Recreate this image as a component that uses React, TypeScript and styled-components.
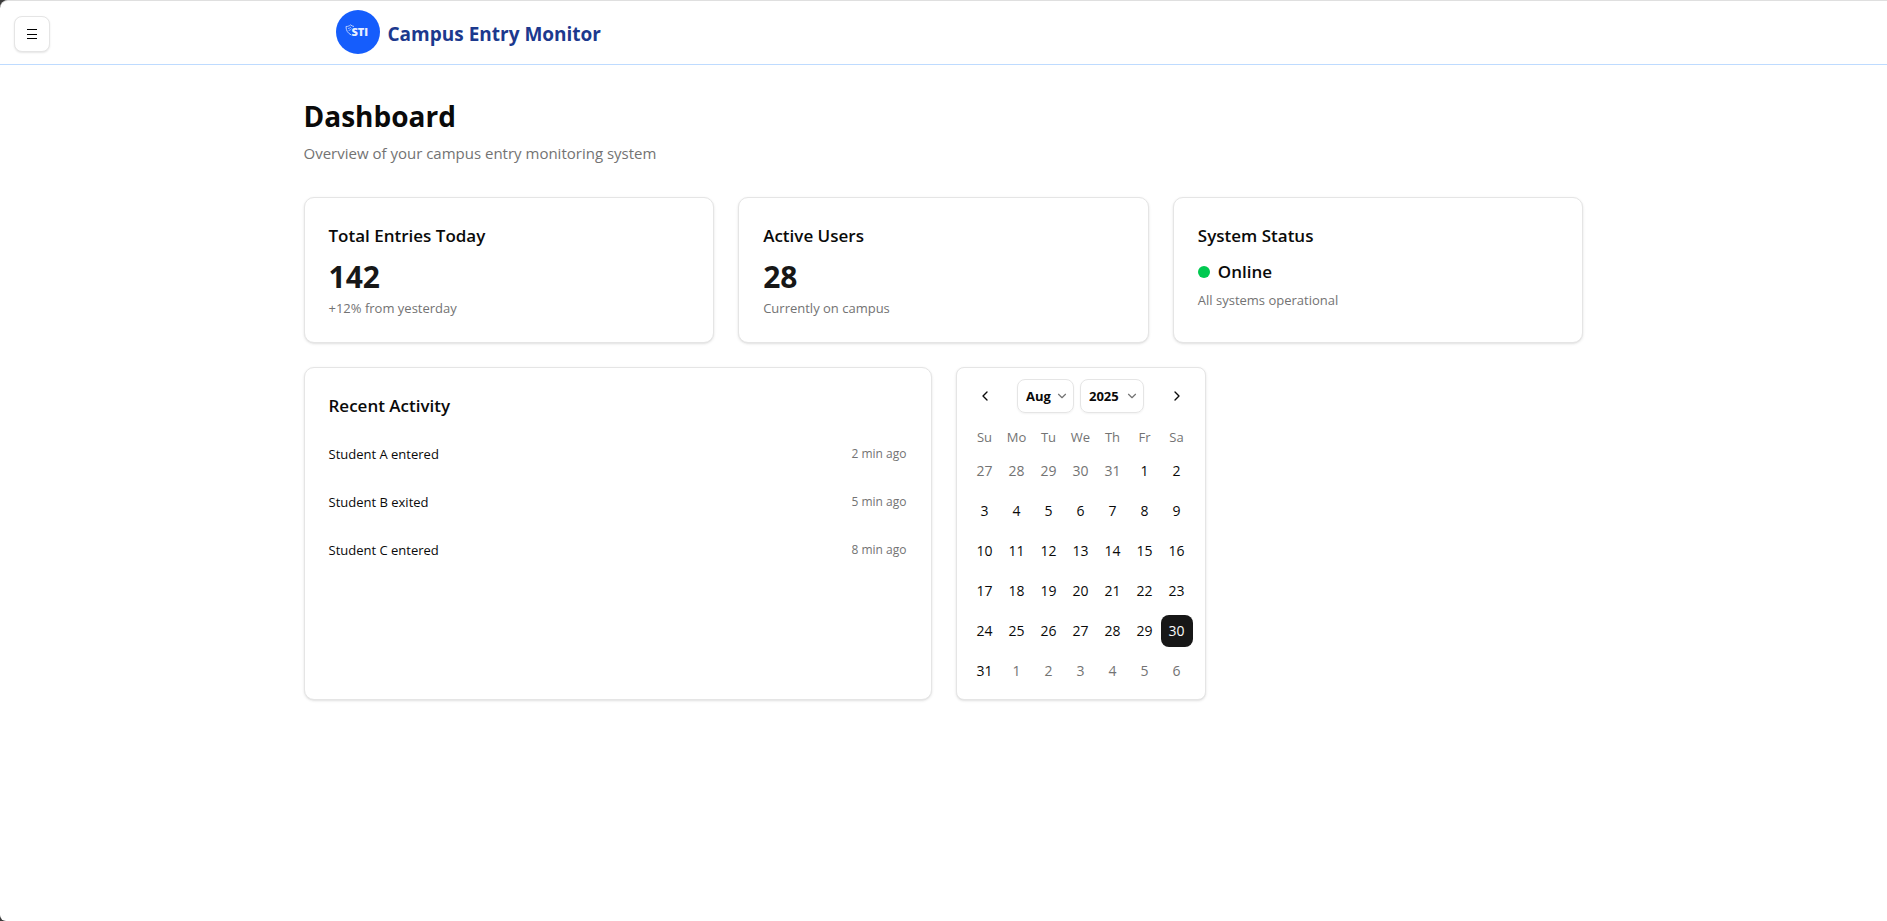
import React, { useState } from "react";
import styled, { createGlobalStyle } from "styled-components";
import { ChevronDown, ChevronLeft, ChevronRight } from "lucide-react";

const color = {
  text: "#0a0a0a",
  muted: "#737373",
  border: "#e5e5e5",
  primary: "#171717",
  brand: "#155dfc",
  brandDark: "#1c398e",
  headerLine: "#bedbff",
  online: "#00c950",
};

const GlobalStyle = createGlobalStyle`
  *, *::before, *::after { box-sizing: border-box; }
  html { background: #3c3c3c; }
  body {
    margin: 0;
    color: ${color.text};
    font-family: "Segoe UI", "Open Sans", "Noto Sans", sans-serif;
    font-size: 13px;
    line-height: 20px;
  }
  h1, h2, p, ul { margin: 0; padding: 0; }
  button, select { font: inherit; color: inherit; }
`;

const Page = styled.div`
  min-height: 100vh;
  background: #fff;
  border-top: 1px solid #dfdfdf;
  border-radius: 8px 0 0 6px;
`;

const Header = styled.header`
  display: flex;
  align-items: center;
  position: relative;
  height: 64px;
  padding-bottom: 1px;
  border-bottom: 1px solid ${color.headerLine};
`;

const MenuButton = styled.button`
  position: absolute;
  left: 14px;
  top: 15px;
  display: grid;
  place-items: center;
  width: 36px;
  height: 36px;
  padding: 0;
  background: #fff;
  border: 1px solid ${color.border};
  border-radius: 8px;
  box-shadow: 0 1px 2px rgba(0, 0, 0, 0.1);
  cursor: pointer;
`;

const Brand = styled.div`
  display: flex;
  align-items: center;
  gap: 8px;
  width: 100%;
  max-width: 1280px;
  margin: 0 auto;
  padding: 0 32px;
`;

const BrandName = styled.span`
  color: ${color.brandDark};
  font-size: 19px;
  line-height: 28px;
  font-weight: 700;
  padding-top: 4px;
`;

const Main = styled.main`
  display: flex;
  flex-direction: column;
  gap: 32px;
  max-width: 1280px;
  margin: 0 auto;
  padding: 32px 0;
`;

const Intro = styled.div`
  display: flex;
  flex-direction: column;
  gap: 6px;
`;

const PageTitle = styled.h1`
  font-size: 28px;
  line-height: 38px;
  font-weight: 700;
`;

const Subtitle = styled.p`
  color: ${color.muted};
  font-size: 15px;
  line-height: 24px;
`;

const Sections = styled.div`
  display: flex;
  flex-direction: column;
  gap: 24px;
`;

const Grid = styled.div<{ $columns: number }>`
  display: grid;
  grid-template-columns: repeat(${(p) => p.$columns}, minmax(0, 1fr));
  gap: 24px;
`;

const Card = styled.section`
  background: #fff;
  border: 1px solid ${color.border};
  border-radius: 10px;
  padding: 24px;
  box-shadow: 0 1px 3px rgba(0, 0, 0, 0.1), 0 1px 2px -1px rgba(0, 0, 0, 0.1);
`;

const CardTitle = styled.h2`
  font-size: 17px;
  line-height: 28px;
  font-weight: 600;
`;

const Figure = styled.p`
  margin-top: 8px;
  color: ${color.primary};
  font-size: 30px;
  line-height: 38px;
  font-weight: 700;

  & + p { margin-top: 2px; }
`;

const Status = styled.p`
  display: flex;
  align-items: center;
  gap: 8px;
  margin-top: 8px;
  font-size: 17px;
  line-height: 28px;
  font-weight: 600;
`;

const Dot = styled.span`
  width: 12px;
  height: 12px;
  border-radius: 50%;
  background: ${color.online};
`;

const Note = styled.p`
  margin-top: 4px;
  color: ${color.muted};
`;

const ActivityList = styled.ul`
  display: flex;
  flex-direction: column;
  gap: 12px;
  margin-top: 16px;
  list-style: none;
`;

const ActivityItem = styled.li`
  display: flex;
  align-items: center;
  justify-content: space-between;
  padding: 8px 0;
`;

const Time = styled.span`
  color: ${color.muted};
  font-size: 12px;
  line-height: 16px;
`;

const CalendarCard = styled(Card)`
  display: flex;
  flex-direction: column;
  gap: 16px;
  justify-self: start;
  padding: 12px;
  border-radius: 8px;
`;

const CalendarNav = styled.div`
  display: flex;
  align-items: center;
  justify-content: space-between;
  height: 32px;
`;

const NavButton = styled.button`
  display: grid;
  place-items: center;
  width: 32px;
  height: 32px;
  padding: 0;
  background: none;
  border: 0;
  border-radius: 8px;
  cursor: pointer;
`;

const Selects = styled.div`
  display: flex;
  gap: 6px;
`;

const SelectBox = styled.div`
  display: grid;
  align-items: center;
  border: 1px solid ${color.border};
  border-radius: 8px;
  box-shadow: 0 1px 2px rgba(0, 0, 0, 0.05);

  & > * { grid-area: 1 / 1; }
  & > svg {
    justify-self: end;
    margin-right: 4px;
    color: ${color.muted};
    pointer-events: none;
  }
`;

const Select = styled.select<{ $width: number }>`
  appearance: none;
  width: ${(p) => p.$width}px;
  height: 32px;
  padding: 0 0 0 8px;
  background: none;
  border: 0;
  font-size: 13px;
  font-weight: 700;
`;

const Month = styled.table`
  border-collapse: collapse;
  table-layout: fixed;
  width: 224px;
`;

const Weekday = styled.th`
  padding: 0;
  height: 19px;
  color: ${color.muted};
  font-size: 13px;
  line-height: 19px;
  font-weight: 400;
`;

const DayCell = styled.td`
  padding: 8px 0 0;
`;

const Day = styled.button<{ $outside: boolean; $selected: boolean }>`
  display: block;
  width: 32px;
  height: 32px;
  padding: 0;
  border: 0;
  border-radius: 8px;
  font-size: 14px;
  text-align: center;
  cursor: pointer;
  background: ${(p) => (p.$selected ? color.primary : "none")};
  color: ${(p) => (p.$selected ? "#fafafa" : p.$outside ? color.muted : color.text)};
`;

const MenuIcon = () => (
  <svg width="12" height="12" viewBox="0 0 12 12" shapeRendering="crispEdges" aria-hidden="true">
    <path d="M1 1.5h10M1 6.5h10M1 10.5h10" stroke="#000" />
  </svg>
);

const Logo = () => (
  <svg width="44" height="44" viewBox="0 0 44 44" role="img" aria-label="STI">
    <circle cx="22" cy="22" r="22" fill={color.brand} />
    <g fill="none" stroke="#b9cffe">
      <path d="M10 16.5c2 0 3.400-.6 4.600-1.600 1 .9 2.200 1.400 3.400 1.600" />
      <path d="M10 16.500c0 4 1.800 6.800 5.400 8.500" />
      <path d="M12 18.600c1.200-.2 2.200-.7 3-1.600M12.600 20.600c1.200-.3 2.300-1 3-2" strokeWidth=".8" />
    </g>
    <text x="15.500" y="26" fill="#e8efff" fontFamily='"Open Sans", sans-serif' fontSize="11" fontWeight="800">
      STI
    </text>
  </svg>
);

const activity = [
  { text: "Student A entered", time: "2 min ago" },
  { text: "Student B exited", time: "5 min ago" },
  { text: "Student C entered", time: "8 min ago" },
];

const monthNames = ["Jan", "Feb", "Mar", "Apr", "May", "Jun", "Jul", "Aug", "Sep", "Oct", "Nov", "Dec"];
const weekdays = ["Su", "Mo", "Tu", "We", "Th", "Fr", "Sa"];
const years = [2023, 2024, 2025, 2026];

function weeksOf(year: number, month: number): Date[][] {
  const lead = new Date(year, month, 1).getDay();
  const length = new Date(year, month + 1, 0).getDate();
  const count = Math.ceil((lead + length) / 7);
  return Array.from({ length: count }, (_, w) =>
    Array.from({ length: 7 }, (_, d) => new Date(year, month, 1 - lead + w * 7 + d))
  );
}

function Calendar() {
  const [view, setView] = useState({ year: 2025, month: 7 });
  const [selected, setSelected] = useState(new Date(2025, 7, 30));

  const show = (year: number, month: number) => {
    const d = new Date(year, month, 1);
    setView({ year: d.getFullYear(), month: d.getMonth() });
  };

  return (
    <CalendarCard aria-label="Calendar">
      <CalendarNav>
        <NavButton aria-label="Previous month" onClick={() => show(view.year, view.month - 1)}>
          <ChevronLeft size={16} />
        </NavButton>
        <Selects>
          <SelectBox>
            <Select
              $width={55}
              aria-label="Month"
              value={view.month}
              onChange={(e) => show(view.year, Number(e.target.value))}
            >
              {monthNames.map((name, i) => (
                <option key={name} value={i}>{name}</option>
              ))}
            </Select>
            <ChevronDown size={14} />
          </SelectBox>
          <SelectBox>
            <Select
              $width={62}
              aria-label="Year"
              value={view.year}
              onChange={(e) => show(Number(e.target.value), view.month)}
            >
              {years.map((y) => (
                <option key={y} value={y}>{y}</option>
              ))}
            </Select>
            <ChevronDown size={14} />
          </SelectBox>
        </Selects>
        <NavButton aria-label="Next month" onClick={() => show(view.year, view.month + 1)}>
          <ChevronRight size={16} />
        </NavButton>
      </CalendarNav>
      <Month>
        <thead>
          <tr>
            {weekdays.map((d) => (
              <Weekday key={d} scope="col">{d}</Weekday>
            ))}
          </tr>
        </thead>
        <tbody>
          {weeksOf(view.year, view.month).map((week) => (
            <tr key={week[0].toISOString()}>
              {week.map((day) => (
                <DayCell key={day.toISOString()}>
                  <Day
                    $outside={day.getMonth() !== view.month}
                    $selected={day.getTime() === selected.getTime()}
                    onClick={() => setSelected(day)}
                  >
                    {day.getDate()}
                  </Day>
                </DayCell>
              ))}
            </tr>
          ))}
        </tbody>
      </Month>
    </CalendarCard>
  );
}

export default function App() {
  return (
    <>
      <GlobalStyle />
      <Page>
        <Header>
          <MenuButton aria-label="Open menu">
            <MenuIcon />
          </MenuButton>
          <Brand>
            <Logo />
            <BrandName>Campus Entry Monitor</BrandName>
          </Brand>
        </Header>
        <Main>
          <Intro>
            <PageTitle>Dashboard</PageTitle>
            <Subtitle>Overview of your campus entry monitoring system</Subtitle>
          </Intro>
          <Sections>
            <Grid $columns={3}>
              <Card>
                <CardTitle>Total Entries Today</CardTitle>
                <Figure>142</Figure>
                <Note>+12% from yesterday</Note>
              </Card>
              <Card>
                <CardTitle>Active Users</CardTitle>
                <Figure>28</Figure>
                <Note>Currently on campus</Note>
              </Card>
              <Card>
                <CardTitle>System Status</CardTitle>
                <Status>
                  <Dot />
                  Online
                </Status>
                <Note>All systems operational</Note>
              </Card>
            </Grid>
            <Grid $columns={2}>
              <Card>
                <CardTitle>Recent Activity</CardTitle>
                <ActivityList>
                  {activity.map((item) => (
                    <ActivityItem key={item.text}>
                      <span>{item.text}</span>
                      <Time>{item.time}</Time>
                    </ActivityItem>
                  ))}
                </ActivityList>
              </Card>
              <Calendar />
            </Grid>
          </Sections>
        </Main>
      </Page>
    </>
  );
}
